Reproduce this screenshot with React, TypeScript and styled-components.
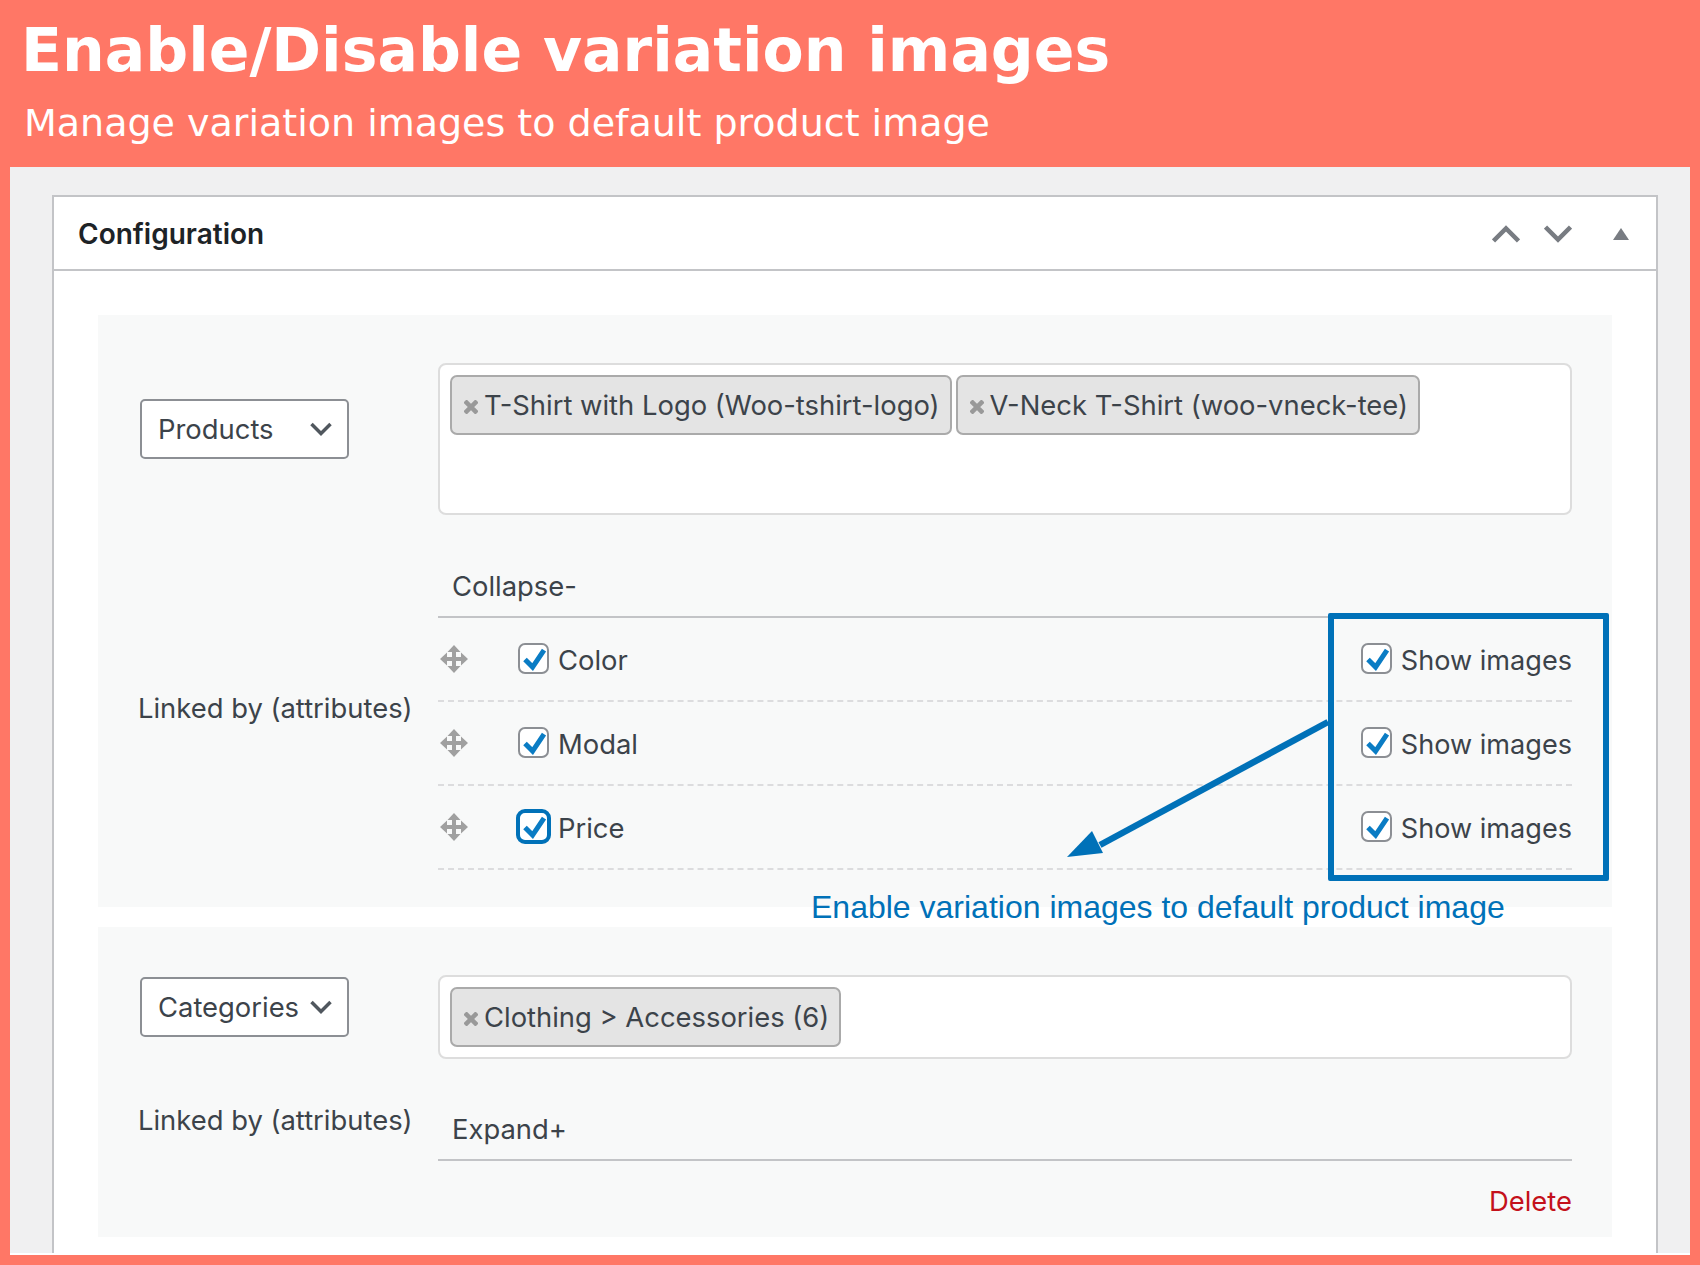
import React from 'react';
import styled, { createGlobalStyle } from 'styled-components';

const Global = createGlobalStyle`
  html, body { margin: 0; padding: 0; background: #ff7766; }
  * { box-sizing: border-box; }
`;

const Page = styled.div`
  width: 1700px;
  height: 1265px;
  background: #ff7766;
  overflow: hidden;
  font-family: Inter, "Liberation Sans", sans-serif;
  color: #3c434a;
`;

const Banner = styled.header`
  height: 167px;
  padding: 18px 0 0 21px;
  color: #fff;
  font-family: "DejaVu Sans", sans-serif;
`;

const Title = styled.h1`
  margin: 0;
  font-size: 60px;
  line-height: 64px;
  font-weight: 700;
`;

const Subtitle = styled.p`
  margin: 19px 0 0 3px;
  font-size: 38px;
  line-height: 44px;
  font-weight: 400;
`;

const Workspace = styled.main`
  height: 1088px;
  margin: 0 10px;
  background: #fff;
  padding-bottom: 2px;
`;

const Backdrop = styled.div`
  height: 100%;
  background: #f0f0f1;
  padding: 28px 32px 0 42px;
  overflow: hidden;
`;

const Metabox = styled.section`
  height: 100%;
  background: #fff;
  border: 2px solid #c3c4c7;
  border-bottom: 0;
`;

const MetaHead = styled.div`
  height: 74px;
  border-bottom: 2px solid #c3c4c7;
  display: flex;
  align-items: center;
  padding: 1px 27px 0 24px;
`;

const MetaTitle = styled.h2`
  flex: 1;
  margin: 0;
  font-size: 28px;
  font-weight: 600;
  color: #1d2327;
`;

const HeadIcons = styled.div`
  display: flex;
  align-items: center;
  gap: 24px;
`;

const HeadIcon = styled.svg<{ $solid?: boolean }>`
  display: block;
  fill: ${(p) => (p.$solid ? '#787c82' : 'none')};
  stroke: ${(p) => (p.$solid ? 'none' : '#787c82')};
  stroke-width: 4.5;
  margin-left: ${(p) => (p.$solid ? 17 : 0)}px;
`;

const MetaBody = styled.div`
  position: relative;
  padding: 44px 44px 0 44px;
`;

const Panel = styled.div<{ $pad: number; $h: number; $last?: boolean }>`
  height: ${(p) => p.$h}px;
  background: #f8f9f9;
  display: grid;
  grid-template-columns: 300px 1134px;
  align-content: start;
  padding: ${(p) => p.$pad}px 40px 0 40px;
  margin-bottom: ${(p) => (p.$last ? 0 : 20)}px;
`;

const SelectCell = styled.div<{ $top: number }>`
  padding: ${(p) => p.$top}px 0 0 2px;
`;

const Select = styled.div`
  width: 209px;
  height: 60px;
  background: #fff;
  border: 2px solid #8c8f94;
  border-radius: 5px;
  display: flex;
  align-items: center;
  justify-content: space-between;
  padding: 0 15px 0 16px;
  font-size: 27.4px;
`;

const ChipBox = styled.div<{ $h: number }>`
  height: ${(p) => p.$h}px;
  background: #fff;
  border: 2px solid #ddd;
  border-radius: 8px;
  padding: 10px;
  display: flex;
  align-items: flex-start;
  gap: 4px;
`;

const Chip = styled.div`
  height: 60px;
  background: #e4e4e4;
  border: 2px solid #aaa;
  border-radius: 7px;
  padding: 0 10px 0 12px;
  display: flex;
  align-items: center;
  font-size: 27.4px;
  white-space: nowrap;
`;

const ChipX = styled.svg`
  width: 14px;
  height: 14px;
  margin-right: 6px;
  margin-top: 3px;
  stroke: #999;
  stroke-width: 4.5;
  flex: none;
`;

const SideLabel = styled.div<{ $down?: number; $up?: number }>`
  align-self: center;
  font-size: 27.4px;
  white-space: nowrap;
  margin: ${(p) => p.$down ?? 0}px 0 ${(p) => p.$up ?? 0}px;
`;

const Attrs = styled.div<{ $top: number }>`
  margin-top: ${(p) => p.$top}px;
`;

const AttrHead = styled.div`
  height: 60px;
  border-bottom: 2px solid #c3c4c7;
  display: flex;
  align-items: center;
  padding: 0 0 2px 14px;
  font-size: 27.4px;
`;

const AttrRow = styled.div`
  height: 84px;
  border-bottom: 2px dashed #dcdcde;
  padding-top: 2px;
  display: flex;
  align-items: center;
  font-size: 27.4px;
`;

const Grip = styled.svg`
  width: 28px;
  height: 28px;
  margin: -2px 50px 0 2px;
  fill: #a0a0a0;
  flex: none;
`;

const Box = styled.span<{ $focus?: boolean }>`
  width: 31px;
  height: 31px;
  flex: none;
  background: #fff;
  border: 2px solid ${(p) => (p.$focus ? '#0071b8' : '#8c8f94')};
  outline: ${(p) => (p.$focus ? '3px solid #0071b8' : 'none')};
  outline-offset: -1px;
  border-radius: 7px;
  margin-top: -3px;
  display: inline-flex;
`;

const BoxTick = styled.svg`
  width: 27px;
  height: 27px;
  fill: none;
  stroke: #0a7cc4;
  stroke-width: 5;
`;

const AttrName = styled.span`
  margin-left: 9px;
  flex: 1;
`;

const ShowImages = styled.label`
  display: flex;
  align-items: center;
  gap: 9px;
  font-size: 27.1px;
`;

const PanelFoot = styled.div`
  height: 80px;
  display: flex;
  align-items: center;
  justify-content: flex-end;
  color: #c4111b;
  font-size: 27.4px;
`;

const Highlight = styled.div`
  position: absolute;
  left: 1274px;
  top: 342px;
  width: 281px;
  height: 268px;
  border: 6px solid #0071b8;
  border-radius: 2px;
  pointer-events: none;
`;

const Arrow = styled.svg`
  position: absolute;
  left: 1001px;
  top: 440px;
  width: 280px;
  height: 160px;
`;

const CalloutText = styled.div`
  position: absolute;
  left: 757px;
  top: 616px;
  font-family: "Liberation Sans", Arial, sans-serif;
  font-size: 32px;
  line-height: 40px;
  color: #0071b8;
  white-space: nowrap;
`;

const Caret = () => (
  <svg width="22" height="14" viewBox="0 0 22 14" fill="none" stroke="#50575e" strokeWidth="3.5">
    <path d="M1.500 2l9.500 9.500L20.500 2" />
  </svg>
);

const ChipItem = ({ label }: { label: string }) => (
  <Chip>
    <ChipX viewBox="0 0 14 14"><path d="M1 1l12 12M13 1L1 13" /></ChipX>
    {label}
  </Chip>
);

const Tick = () => (
  <BoxTick viewBox="0 0 27 27"><path d="M5 14.500l7.600 7.600L24 5.200" /></BoxTick>
);

const MoveGlyph = () => (
  <Grip viewBox="0 0 28 28">
    <path d="M14 0l6.500 7h-4.500v5h5V7.500l7 6.500-7 6.500V16h-5v5h4.500L14 28l-6.500-7H12v-5H7v4.500L0 14l7-6.500V12h5V7H7.500z" />
  </Grip>
);

const Row = ({ name, focus }: { name: string; focus?: boolean }) => (
  <AttrRow>
    <MoveGlyph />
    <Box $focus={focus}><Tick /></Box>
    <AttrName>{name}</AttrName>
    <ShowImages>
      <Box><Tick /></Box>
      Show images
    </ShowImages>
  </AttrRow>
);

export default function App() {
  return (
    <Page>
      <Global />
      <Banner>
        <Title>Enable/Disable variation images</Title>
        <Subtitle>Manage variation images to default product image</Subtitle>
      </Banner>
      <Workspace>
        <Backdrop>
          <Metabox>
            <MetaHead>
              <MetaTitle>Configuration</MetaTitle>
              <HeadIcons>
                <HeadIcon width="28" height="18" viewBox="0 0 28 18"><path d="M1.500 16L14 3.500 26.500 16" /></HeadIcon>
                <HeadIcon width="28" height="18" viewBox="0 0 28 18"><path d="M1.500 2L14 14.500 26.500 2" /></HeadIcon>
                <HeadIcon $solid width="16" height="12" viewBox="0 0 16 12"><path d="M8 0l8 12H0z" /></HeadIcon>
              </HeadIcons>
            </MetaHead>
            <MetaBody>
              <Panel $pad={48} $h={592}>
                <SelectCell $top={36}>
                  <Select>Products<Caret /></Select>
                </SelectCell>
                <ChipBox $h={152}>
                  <ChipItem label="T-Shirt with Logo (Woo-tshirt-logo)" />
                  <ChipItem label="V-Neck T-Shirt (woo-vneck-tee)" />
                </ChipBox>
                <SideLabel $down={30}>Linked by (attributes)</SideLabel>
                <Attrs $top={43}>
                  <AttrHead>Collapse-</AttrHead>
                  <Row name="Color" />
                  <Row name="Modal" />
                  <Row name="Price" focus />
                </Attrs>
              </Panel>
              <Panel $pad={48} $h={310} $last>
                <SelectCell $top={2}>
                  <Select>Categories<Caret /></Select>
                </SelectCell>
                <ChipBox $h={84}>
                  <ChipItem label="Clothing > Accessories (6)" />
                </ChipBox>
                <SideLabel $up={60}>Linked by (attributes)</SideLabel>
                <Attrs $top={42}>
                  <AttrHead>Expand+</AttrHead>
                  <PanelFoot>Delete</PanelFoot>
                </Attrs>
              </Panel>
              <Highlight />
              <Arrow viewBox="0 0 280 160">
                <path d="M273 11L45 134" stroke="#0071b8" strokeWidth="6.500" fill="none" />
                <path d="M12 146l25-26 11 22z" fill="#0071b8" />
              </Arrow>
              <CalloutText>Enable variation images to default product image</CalloutText>
            </MetaBody>
          </Metabox>
        </Backdrop>
      </Workspace>
    </Page>
  );
}
